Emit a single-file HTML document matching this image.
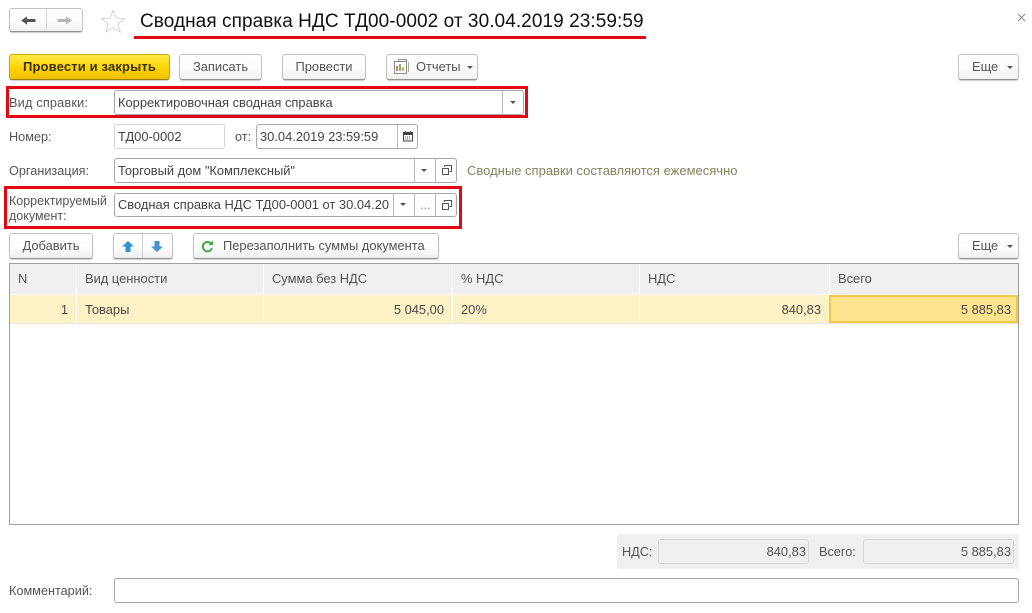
<!DOCTYPE html>
<html><head><meta charset="utf-8"><style>
html,body{margin:0;padding:0;background:#fff}
#p{position:relative;width:1032px;height:613px;overflow:hidden;background:#fff;font-family:"Liberation Sans",sans-serif;font-size:12.9px;color:#555}
#p div,#p svg{position:absolute;box-sizing:border-box}
.t{white-space:nowrap;line-height:14px}
.l{font-size:12.7px}
.b{background:linear-gradient(#fff,#fbfbfb 60%,#f0f0f0);border:1px solid #c4c4c4;border-bottom-color:#929292;border-radius:3px;box-shadow:0 1px 1px #ccc;text-align:center;line-height:24px;white-space:nowrap;color:#555}
.f{background:#fff;border:1px solid #a8a8a8;border-radius:3px}
.d{width:1px;background:#bcbcbc}
.r{border:3px solid #e30613}
.ar{width:0;height:0;border-left:3px solid transparent;border-right:3px solid transparent;border-top:3px solid #555}
.h{top:264px;height:30px;background:#f0f0f0;line-height:29px;padding-left:8px;white-space:nowrap;border-right:1px solid #fff}
.c{top:295px;height:28px;background:#fdf2c5;line-height:29px;padding:0 8px;white-space:nowrap;color:#4a4a4a;border-right:1px solid #fff}
</style></head><body><div id="p">

<div class="b" style="left:9px;top:8px;width:74px;height:24px"></div>
<div class="d" style="left:46px;top:9px;height:22px;background:#d8d8d8"></div>
<svg style="left:21px;top:16px" width="15" height="9" viewBox="0 0 15 9"><path d="M0 4.5 L6 .5 V3 H14.5 V6 H6 V8.5 Z" fill="#555"/></svg>
<svg style="left:57px;top:16px" width="15" height="9" viewBox="0 0 15 9"><path d="M15 4.5 L9 .5 V3 H.5 V6 H9 V8.5 Z" fill="#b8b8b8"/></svg>
<svg style="left:100px;top:9px" width="26" height="24" viewBox="0 0 26 24"><path d="M13 1.5 L16 9 L24.5 9.5 L18 15 L20.2 23 L13 18.6 L5.8 23 L8 15 L1.5 9.5 L10 9 Z" fill="#fff" stroke="#cfcfcf" stroke-width=".9"/></svg>
<div class="t" style="left:140px;top:11px;font-size:19px;line-height:21px;color:#111;letter-spacing:.07px">Сводная справка НДС ТД00-0002 от 30.04.2019 23:59:59</div>
<div style="left:134px;top:36px;width:512px;height:3px;background:#e30613"></div>
<svg style="left:1017px;top:13px" width="9" height="9" viewBox="0 0 9 9"><path d="M1 1 L8 8 M8 1 L1 8" stroke="#888" stroke-width="1" fill="none"/></svg>

<div class="b" style="left:9px;top:54px;width:161px;height:26px;background:linear-gradient(#ffe94a,#fdd500 55%,#f0c000);border-color:#c9a800;border-bottom-color:#9a8200;font-weight:bold;color:#3a3000;font-size:13px;letter-spacing:.15px">Провести и закрыть</div>
<div class="b" style="left:179px;top:54px;width:83px;height:26px">Записать</div>
<div class="b" style="left:282px;top:54px;width:84px;height:26px">Провести</div>
<div class="b" style="left:386px;top:54px;width:92px;height:26px;text-align:left;padding-left:29px">Отчеты</div>
<svg style="left:393px;top:58px" width="17" height="18" viewBox="0 0 17 18"><rect x="5.5" y="1.5" width="8" height="10" fill="#f2f2ec" stroke="#9a9a90"/><rect x="1.5" y="3.5" width="12" height="12" fill="#fff" stroke="#8a8a80"/><path d="M4 13V8" stroke="#c0603a" stroke-width="1.6"/><path d="M7 13V6" stroke="#6a9a50" stroke-width="1.6"/><path d="M10 13V9" stroke="#c09a40" stroke-width="1.6"/><path d="M15.5 4V14" stroke="#aaa"/></svg>
<div class="ar" style="left:467px;top:66px"></div>
<div class="b" style="left:958px;top:54px;width:61px;height:26px;text-align:left;padding-left:13px">Еще</div>
<div class="ar" style="left:1007px;top:66px"></div>

<div class="r" style="left:6px;top:86px;width:522px;height:32px"></div>
<div class="t l" style="left:9px;top:96px;letter-spacing:.2px">Вид справки:</div>
<div class="f" style="left:114px;top:90px;width:410px;height:25px"></div>
<div class="t" style="left:118px;top:96px;color:#444">Корректировочная сводная справка</div>
<div class="d" style="left:502px;top:91px;height:23px"></div>
<div class="ar" style="left:510px;top:101px"></div>

<div class="t l" style="left:9px;top:130px">Номер:</div>
<div class="f" style="left:114px;top:124px;width:111px;height:25px;border-color:#d6d6d6"></div>
<div class="t" style="left:118px;top:130px;color:#444">ТД00-0002</div>
<div class="t l" style="left:235px;top:130px">от:</div>
<div class="f" style="left:256px;top:124px;width:162px;height:25px"></div>
<div class="t" style="left:260px;top:130px;color:#444">30.04.2019 23:59:59</div>
<div class="d" style="left:397px;top:125px;height:23px"></div>
<svg style="left:402px;top:130px" width="13" height="13" viewBox="0 0 13 13"><rect x="1.5" y="2.5" width="9" height="8.5" fill="#fff" stroke="#444"/><path d="M1.5 3h9v2h-9z" fill="#444"/><path d="M3 7h6M3 9h6" stroke="#555" stroke-dasharray="1 1"/><path d="M3.5 1v2M8.5 1v2" stroke="#444"/></svg>

<div class="t l" style="left:9px;top:164px">Организация:</div>
<div class="f" style="left:114px;top:158px;width:343px;height:25px"></div>
<div class="t" style="left:118px;top:164px;color:#444">Торговый дом "Комплексный"</div>
<div class="d" style="left:414px;top:159px;height:23px"></div>
<div class="d" style="left:435px;top:159px;height:23px"></div>
<div class="ar" style="left:421px;top:169px"></div>
<svg style="left:441px;top:164px" width="12" height="12" viewBox="0 0 12 12"><path d="M3.5 3V1.5H10.5V7.5H8.5" fill="none" stroke="#555"/><rect x="1.5" y="4.5" width="6" height="6" fill="none" stroke="#555"/></svg>
<div class="t" style="left:467px;top:164px;color:#85805c;font-size:13px">Сводные справки составляются ежемесячно</div>

<div class="r" style="left:4px;top:186px;width:458px;height:43px"></div>
<div class="t l" style="left:9px;top:194px;line-height:15px;font-size:12.5px">Корректируемый<br>документ:</div>
<div class="f" style="left:114px;top:193px;width:343px;height:24px"></div>
<div class="t" style="left:118px;top:198px;width:272px;overflow:hidden;color:#444">Сводная справка НДС ТД00-0001 от 30.04.2019</div>
<div class="d" style="left:393px;top:194px;height:22px"></div>
<div class="d" style="left:414px;top:194px;height:22px"></div>
<div class="d" style="left:435px;top:194px;height:22px"></div>
<div class="ar" style="left:400px;top:203px"></div>
<div class="t" style="left:420px;top:198px;color:#888">...</div>
<svg style="left:441px;top:199px" width="12" height="12" viewBox="0 0 12 12"><path d="M3.5 3V1.5H10.5V7.5H8.5" fill="none" stroke="#555"/><rect x="1.5" y="4.5" width="6" height="6" fill="none" stroke="#555"/></svg>

<div class="b" style="left:9px;top:233px;width:84px;height:26px">Добавить</div>
<div class="b" style="left:113px;top:233px;width:60px;height:26px"></div>
<div class="d" style="left:142px;top:234px;height:24px;background:#d0d0d0"></div>
<svg style="left:122px;top:241px" width="12" height="11" viewBox="0 0 12 11"><path d="M6 0 L12 5.5 H8.5 V11 H3.5 V5.5 H0 Z" fill="#2f93d0"/></svg>
<svg style="left:151px;top:241px" width="12" height="11" viewBox="0 0 12 11"><path d="M6 11 L12 5.5 H8.5 V0 H3.5 V5.5 H0 Z" fill="#4a8fcf"/></svg>
<div class="b" style="left:193px;top:233px;width:246px;height:26px;text-align:left;padding-left:29px">Перезаполнить суммы документа</div>
<svg style="left:201px;top:240px" width="13" height="13" viewBox="0 0 13 13"><path d="M10.3 3.8 A4.7 4.7 0 1 0 11 8.2" fill="none" stroke="#46a546" stroke-width="2"/><path d="M7.5 5 H12 V.5 Z" fill="#46a546"/></svg>
<div class="b" style="left:958px;top:233px;width:61px;height:26px;text-align:left;padding-left:13px">Еще</div>
<div class="ar" style="left:1007px;top:245px"></div>

<div style="left:9px;top:263px;width:1010px;height:262px;border:1px solid #a0a0a0;background:#fff"></div>
<div class="h" style="left:10px;width:67px">N</div>
<div class="h" style="left:77px;width:187px">Вид ценности</div>
<div class="h" style="left:264px;width:189px">Сумма без НДС</div>
<div class="h" style="left:453px;width:187px">% НДС</div>
<div class="h" style="left:640px;width:190px">НДС</div>
<div class="h" style="left:830px;width:188px;border-right:0">Всего</div>
<div class="c" style="left:10px;width:67px;text-align:right">1</div>
<div class="c" style="left:77px;width:187px">Товары</div>
<div class="c" style="left:264px;width:189px;text-align:right">5 045,00</div>
<div class="c" style="left:453px;width:187px">20%</div>
<div class="c" style="left:640px;width:190px;text-align:right">840,83</div>
<div class="c" style="left:829px;width:189px;text-align:right;background:#fde38e;border:2px solid #efc94c;line-height:25px;padding:0 5px 0 8px">5 885,83</div>
<div style="left:10px;top:323px;width:1008px;height:1px;background:#e4e4e4"></div>

<div style="left:617px;top:534px;width:402px;height:35px;background:#f0f0f0"></div>
<div class="t l" style="left:622px;top:545px">НДС:</div>
<div style="left:658px;top:539px;width:151px;height:25px;border:1px solid #d8d8d8;border-radius:3px;background:#f0f0f0;text-align:right;line-height:23px;padding-right:2px">840,83</div>
<div class="t l" style="left:819px;top:545px">Всего:</div>
<div style="left:863px;top:539px;width:151px;height:25px;border:1px solid #d8d8d8;border-radius:3px;background:#f0f0f0;text-align:right;line-height:23px;padding-right:2px">5 885,83</div>

<div class="t l" style="left:9px;top:584px">Комментарий:</div>
<div class="f" style="left:114px;top:578px;width:905px;height:25px"></div>
</div></body></html>
